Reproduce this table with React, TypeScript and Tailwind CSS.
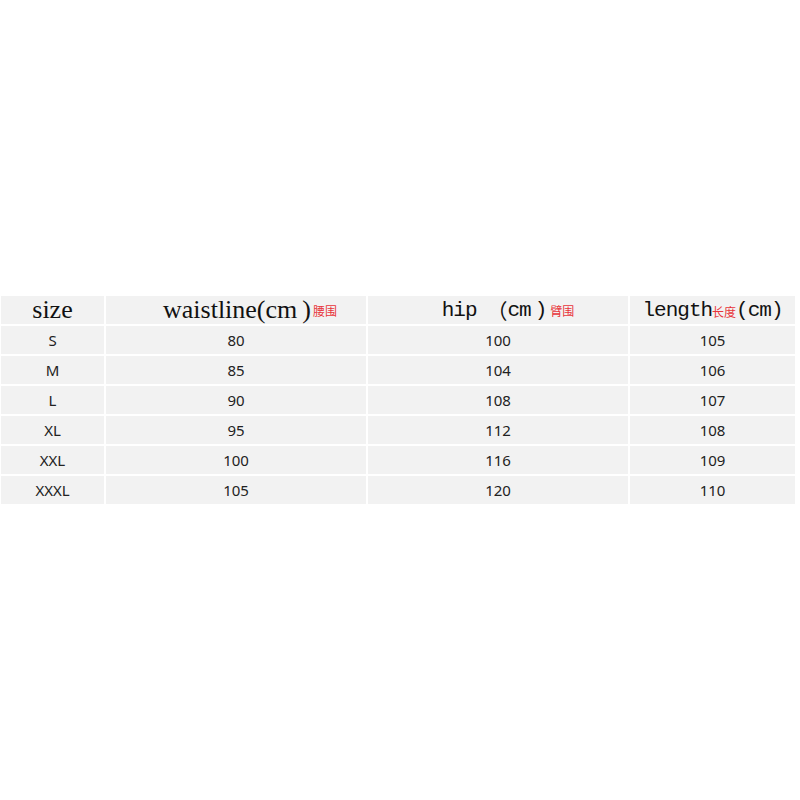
const rows = [
  ["S", "80", "100", "105"],
  ["M", "85", "104", "106"],
  ["L", "90", "108", "107"],
  ["XL", "95", "112", "108"],
  ["XXL", "100", "116", "109"],
  ["XXXL", "105", "120", "110"],
];

function Cell({ children }: { children: React.ReactNode }) {
  return (
    <div className="h-[28px] bg-[#f2f2f2] flex items-center justify-center text-[15px] text-[#222] font-['Noto_Sans',sans-serif]">
      {children}
    </div>
  );
}

function Red({ children }: { children: React.ReactNode }) {
  return (
    <span className="text-[12px] text-[#e8353b] mt-[2px] font-['Noto_Sans_CJK_SC',sans-serif]">
      {children}
    </span>
  );
}

export default function App() {
  return (
    <div className="w-[800px] h-[800px] bg-white pt-[296px] pl-[1px]">
      <div className="grid grid-cols-[103px_260px_260px_165px] gap-[2px] bg-white w-[794px]">
        <div className="h-[28px] bg-[#f2f2f2] flex items-center justify-center text-[26px] text-[#111] leading-none font-['Liberation_Serif',serif]">
          size
        </div>
        <div className="h-[28px] bg-[#f2f2f2] flex items-center justify-center pl-[28px] text-[#111] leading-none">
          <span className="text-[26px] font-['Liberation_Serif',serif]">waistline(cm</span>
          <span className="text-[26px] ml-[5px] mr-[2px] font-['Liberation_Serif',serif]">)</span>
          <Red>腰围</Red>
        </div>
        <div className="h-[28px] bg-[#f2f2f2] flex items-center justify-center pl-[20px] text-[#111] leading-none">
          <span className="text-[21px] tracking-[-1px] font-['Liberation_Mono',monospace]">hip</span>
          <span className="text-[21px] ml-[10px] font-['Noto_Sans_CJK_SC',sans-serif]">（</span>
          <span className="text-[21px] tracking-[-1px] font-['Liberation_Mono',monospace]">cm</span>
          <span className="text-[21px] ml-[4px] mr-[3px] font-['Liberation_Mono',monospace]">)</span>
          <Red>臂围</Red>
        </div>
        <div className="h-[28px] bg-[#f2f2f2] flex items-center justify-center text-[#111] leading-none">
          <span className="text-[21px] tracking-[-1px] font-['Liberation_Mono',monospace]">length</span>
          <span className="text-[12px] text-[#e8353b] mt-[4px] font-['Noto_Sans_CJK_SC',sans-serif]">长度</span>
          <span className="text-[21px] tracking-[-1px] font-['Liberation_Mono',monospace]">(cm)</span>
        </div>
        {rows.map((r, i) => r.map((c, j) => <Cell key={i + "-" + j}>{c}</Cell>))}
      </div>
    </div>
  );
}
